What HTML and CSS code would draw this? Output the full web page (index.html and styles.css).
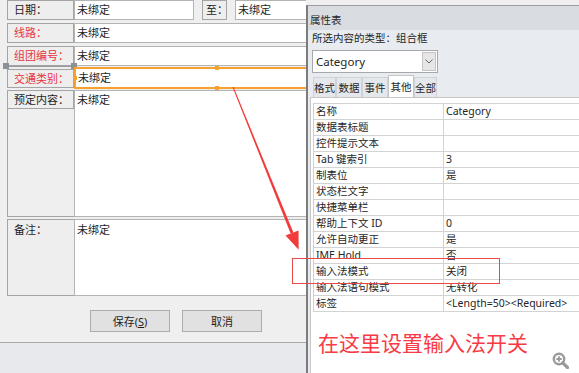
FILE: index.html
```html
<!doctype html>
<html lang="zh-CN">

<head>
	<meta charset="UTF-8">
	<title>属性表</title>
	<link rel="stylesheet" href="styles.css">
</head>

<body>
	<div class="screen">
		<div class="form">
			<div class="row row-date">
				<div class="label">日期：</div>
				<div class="value short">未绑定</div>
				<div class="to">至：</div>
				<div class="value">未绑定</div>
			</div>
			<div class="row">
				<div class="label red">线路：</div>
				<div class="value">未绑定</div>
			</div>
			<div class="row">
				<div class="label red">组团编号：</div>
				<div class="value">未绑定</div>
			</div>
			<div class="row selected">
				<span class="grip grip-a"></span>
				<span class="grip-line"></span>
				<span class="grip grip-b"></span>
				<div class="label red">交通类别：</div>
				<div class="value">未绑定
					<span class="dot dot-top"></span>
					<span class="dot dot-bottom"></span>
					<span class="dot dot-left"></span>
				</div>
			</div>
			<div class="block">
				<div class="side">
					<div class="label">预定内容：</div>
				</div>
				<div class="value">未绑定</div>
			</div>
			<div class="block memo">
				<div class="side">备注：</div>
				<div class="value">未绑定</div>
			</div>
			<div class="actions">
				<button class="btn">保存(<u>S</u>)</button>
				<button class="btn">取消</button>
			</div>
			<div class="footer"></div>
		</div>

		<aside class="panel">
			<div class="panel-title">属性表</div>
			<div class="panel-type">所选内容的类型：组合框</div>
			<div class="combo">
				<span>Category</span>
				<span class="combo-btn">
					<svg width="8" height="5" viewBox="0 0 8 5"><path d="M0.5 0.5 L4 4 L7.5 0.5" fill="none" stroke="#666" stroke-width="1"/></svg>
				</span>
			</div>
			<div class="tabs">
				<span class="tab">格式</span>
				<span class="tab">数据</span>
				<span class="tab">事件</span>
				<span class="tab active">其他</span>
				<span class="tab">全部</span>
			</div>
			<div class="sheet">
				<div class="props">
					<div class="name">名称</div><div class="val">Category</div>
					<div class="name">数据表标题</div><div class="val"></div>
					<div class="name">控件提示文本</div><div class="val"></div>
					<div class="name">Tab 键索引</div><div class="val">3</div>
					<div class="name">制表位</div><div class="val">是</div>
					<div class="name">状态栏文字</div><div class="val"></div>
					<div class="name">快捷菜单栏</div><div class="val"></div>
					<div class="name">帮助上下文 ID</div><div class="val">0</div>
					<div class="name">允许自动更正</div><div class="val">是</div>
					<div class="name">IME Hold</div><div class="val">否</div>
					<div class="name">输入法模式</div><div class="val">关闭</div>
					<div class="name">输入法语句模式</div><div class="val">无转化</div>
					<div class="name">标签</div><div class="val">&lt;Length=50&gt;&lt;Required&gt;</div>
				</div>
				<p class="note">在这里设置输入法开关</p>
				<svg class="zoom-icon" width="17" height="17" viewBox="0 0 17 17">
					<circle cx="7" cy="7" r="5.2" fill="#fff" stroke="#9a9a9a" stroke-width="2.4"/>
					<path d="M4.3 7 H9.7 M7 4.3 V9.7" stroke="#9a9a9a" stroke-width="1.8"/>
					<path d="M10.8 10.8 L15.5 15.5" stroke="#9a9a9a" stroke-width="3.2" stroke-linecap="round"/>
				</svg>
			</div>
		</aside>

		<!-- annotation drawn over the screenshot -->
		<svg class="annot" width="579" height="373" viewBox="0 0 579 373">
			<polygon points="233.46,86.81 232.54,87.19 290.61,233.56 293.39,232.44" fill="#f23b3b"/>
			<polygon points="298.7,249.7 298.5,230.4 285.5,235.6" fill="#f23b3b"/>
			<rect x="292.5" y="258.5" width="207" height="25" fill="none" stroke="#e84a4a" stroke-width="1"/>
		</svg>
	</div>
</body>

</html>
```

FILE: styles.css
```css
* {
	box-sizing: border-box;
	margin: 0;
	padding: 0;
}

body {
	width: 579px;
	height: 373px;
	overflow: hidden;
	background: #efefef;
	color: #1e1e1e;
	font-family: "Noto Sans", "Noto Sans CJK SC", sans-serif;
	font-size: 11px;
}

.screen {
	position: relative;
	display: flex;
	height: 373px;
}

/* ---------- left form ---------- */

.form {
	width: 306px;
	flex: none;
	display: flex;
	flex-direction: column;
}

.row {
	position: relative;
	display: flex;
	height: 20px;
	margin-top: 3px;
	padding-left: 7px;
}

.row-date {
	margin-top: 0;
}

.label {
	width: 67px;
	flex: none;
	height: 100%;
	padding-left: 6px;
	line-height: 18px;
	background: #eeeeee;
	border: 1px solid #a4a4a4;
	white-space: nowrap;
}

.red {
	color: #e8343c;
}

.value {
	position: relative;
	flex: 1;
	height: 100%;
	padding-left: 2px;
	line-height: 18px;
	background: #ffffff;
	border: 1px solid #b4b4b4;
	border-right: 0;
	white-space: nowrap;
}

.value.short {
	flex: none;
	width: 120px;
	border-right: 1px solid #b4b4b4;
}

.to {
	flex: none;
	width: 25px;
	margin: 0 8px;
	padding-left: 3px;
	line-height: 18px;
	background: #eeeeee;
	border: 1px solid #a4a4a4;
}

/* selected control */
.selected {
	height: 22px;
	margin-top: 1px;
}

.selected .label {
	height: 19px;
	margin-top: 2px;
}

.selected .value {
	line-height: 18px;
	border: 2px solid #f7a130;
	border-right: 0;
}

.grip {
	position: absolute;
	top: -4px;
	width: 6px;
	height: 6px;
	background: #8c9097;
}

.grip-a {
	left: 3px;
}

.grip-b {
	left: 71px;
}

.grip-line {
	position: absolute;
	top: -1px;
	left: 9px;
	width: 62px;
	height: 1px;
	background: #9a9a9a;
}

.dot {
	position: absolute;
	width: 4px;
	height: 4px;
	background: #f7a130;
}

.dot-top {
	top: -3px;
	left: 139px;
}

.dot-bottom {
	bottom: -3px;
	left: 139px;
}

.dot-left {
	top: 7px;
	left: -3px;
}

/* tall blocks */
.block {
	display: flex;
	height: 127px;
	margin-top: 1px;
	padding-left: 7px;
}

.side {
	width: 67px;
	flex: none;
	border-left: 1px solid #a4a4a4;
	border-bottom: 1px solid #a4a4a4;
}

.block .side .label {
	height: 19px;
	margin-left: -1px;
	width: 67px;
}

.block .value {
	height: 100%;
	line-height: 18px;
}

.memo {
	height: 77px;
	margin-top: 2px;
}

.memo .side {
	padding: 1px 0 0 6px;
	line-height: 18px;
	background: #eeeeee;
	border: 1px solid #a4a4a4;
	border-right: 0;
}

.memo .value {
	padding-top: 1px;
}

.actions {
	display: flex;
	gap: 12px;
	margin-top: 14px;
	padding-left: 90px;
}

.btn {
	width: 80px;
	height: 22px;
	font-family: inherit;
	font-size: 11px;
	color: #1e1e1e;
	background: #e1e1e1;
	border: 1px solid #adadad;
}

.footer {
	flex: 1;
	margin-top: 10px;
	background: #e7e9ed;
	border-top: 1px solid #a9a9a9;
}

/* ---------- property sheet ---------- */

.panel {
	flex: 1;
	display: flex;
	flex-direction: column;
	margin-top: 5px;
	background: #e8ebef;
	border-left: 2px solid #7c7c7c;
	border-top: 1px solid #9c9c9c;
	font-size: 10.5px;
	color: #262626;
}

.panel-title {
	height: 24px;
	padding: 4px 0 0 2px;
	line-height: 20px;
	background: #d9dde2;
}

.panel-type {
	height: 16px;
	padding-left: 4px;
	line-height: 16px;
}

.combo {
	display: flex;
	align-items: center;
	justify-content: space-between;
	width: 126px;
	height: 23px;
	margin: 4px 0 0 4px;
	padding: 0 1px 0 3px;
	font-size: 11.5px;
	background: #ffffff;
	border: 1px solid #a8a8a8;
}

.combo-btn {
	display: flex;
	align-items: center;
	justify-content: center;
	width: 14px;
	height: 19px;
	background: #e6e6e6;
	border: 1px solid #c4c4c4;
}

.tabs {
	display: flex;
	height: 20px;
	margin: 4px 0 0 5px;
	position: relative;
	z-index: 2;
}

.tab {
	width: 26px;
	height: 20px;
	text-align: center;
	line-height: 20px;
	background: #e4e7eb;
	border: 1px solid #cfd2d6;
	border-bottom: 0;
}

.tab:first-child,
.tab:last-child {
	width: 23px;
}

.tab.active {
	height: 22px;
	margin-top: -2px;
	line-height: 22px;
	background: #ffffff;
	border-color: #c6c6c6;
}

.sheet {
	position: relative;
	flex: 1;
	margin-left: 2px;
	padding: 5px 0 0 2px;
	background: #ffffff;
	border-left: 1px solid #c6c6c6;
	border-top: 1px solid #c6c6c6;
}

.props {
	display: grid;
	grid-template-columns: 130px 1fr;
	border-top: 1px solid #d3d3d3;
	border-left: 1px solid #cfcfcf;
}

.props div {
	height: 16px;
	padding-left: 2px;
	line-height: 15px;
	border-bottom: 1px solid #d3d3d3;
	white-space: nowrap;
	overflow: hidden;
}

.props .name {
	border-right: 1px solid #d3d3d3;
}

.note {
	margin-top: 18px;
	padding-left: 5px;
	font-family: "Noto Sans CJK SC", sans-serif;
	font-size: 21px;
	line-height: 24px;
	color: #f83a44;
}

.zoom-icon {
	position: absolute;
	right: 10px;
	bottom: 4px;
}

.annot {
	position: absolute;
	left: 0;
	top: 0;
	pointer-events: none;
	z-index: 10;
}
```
